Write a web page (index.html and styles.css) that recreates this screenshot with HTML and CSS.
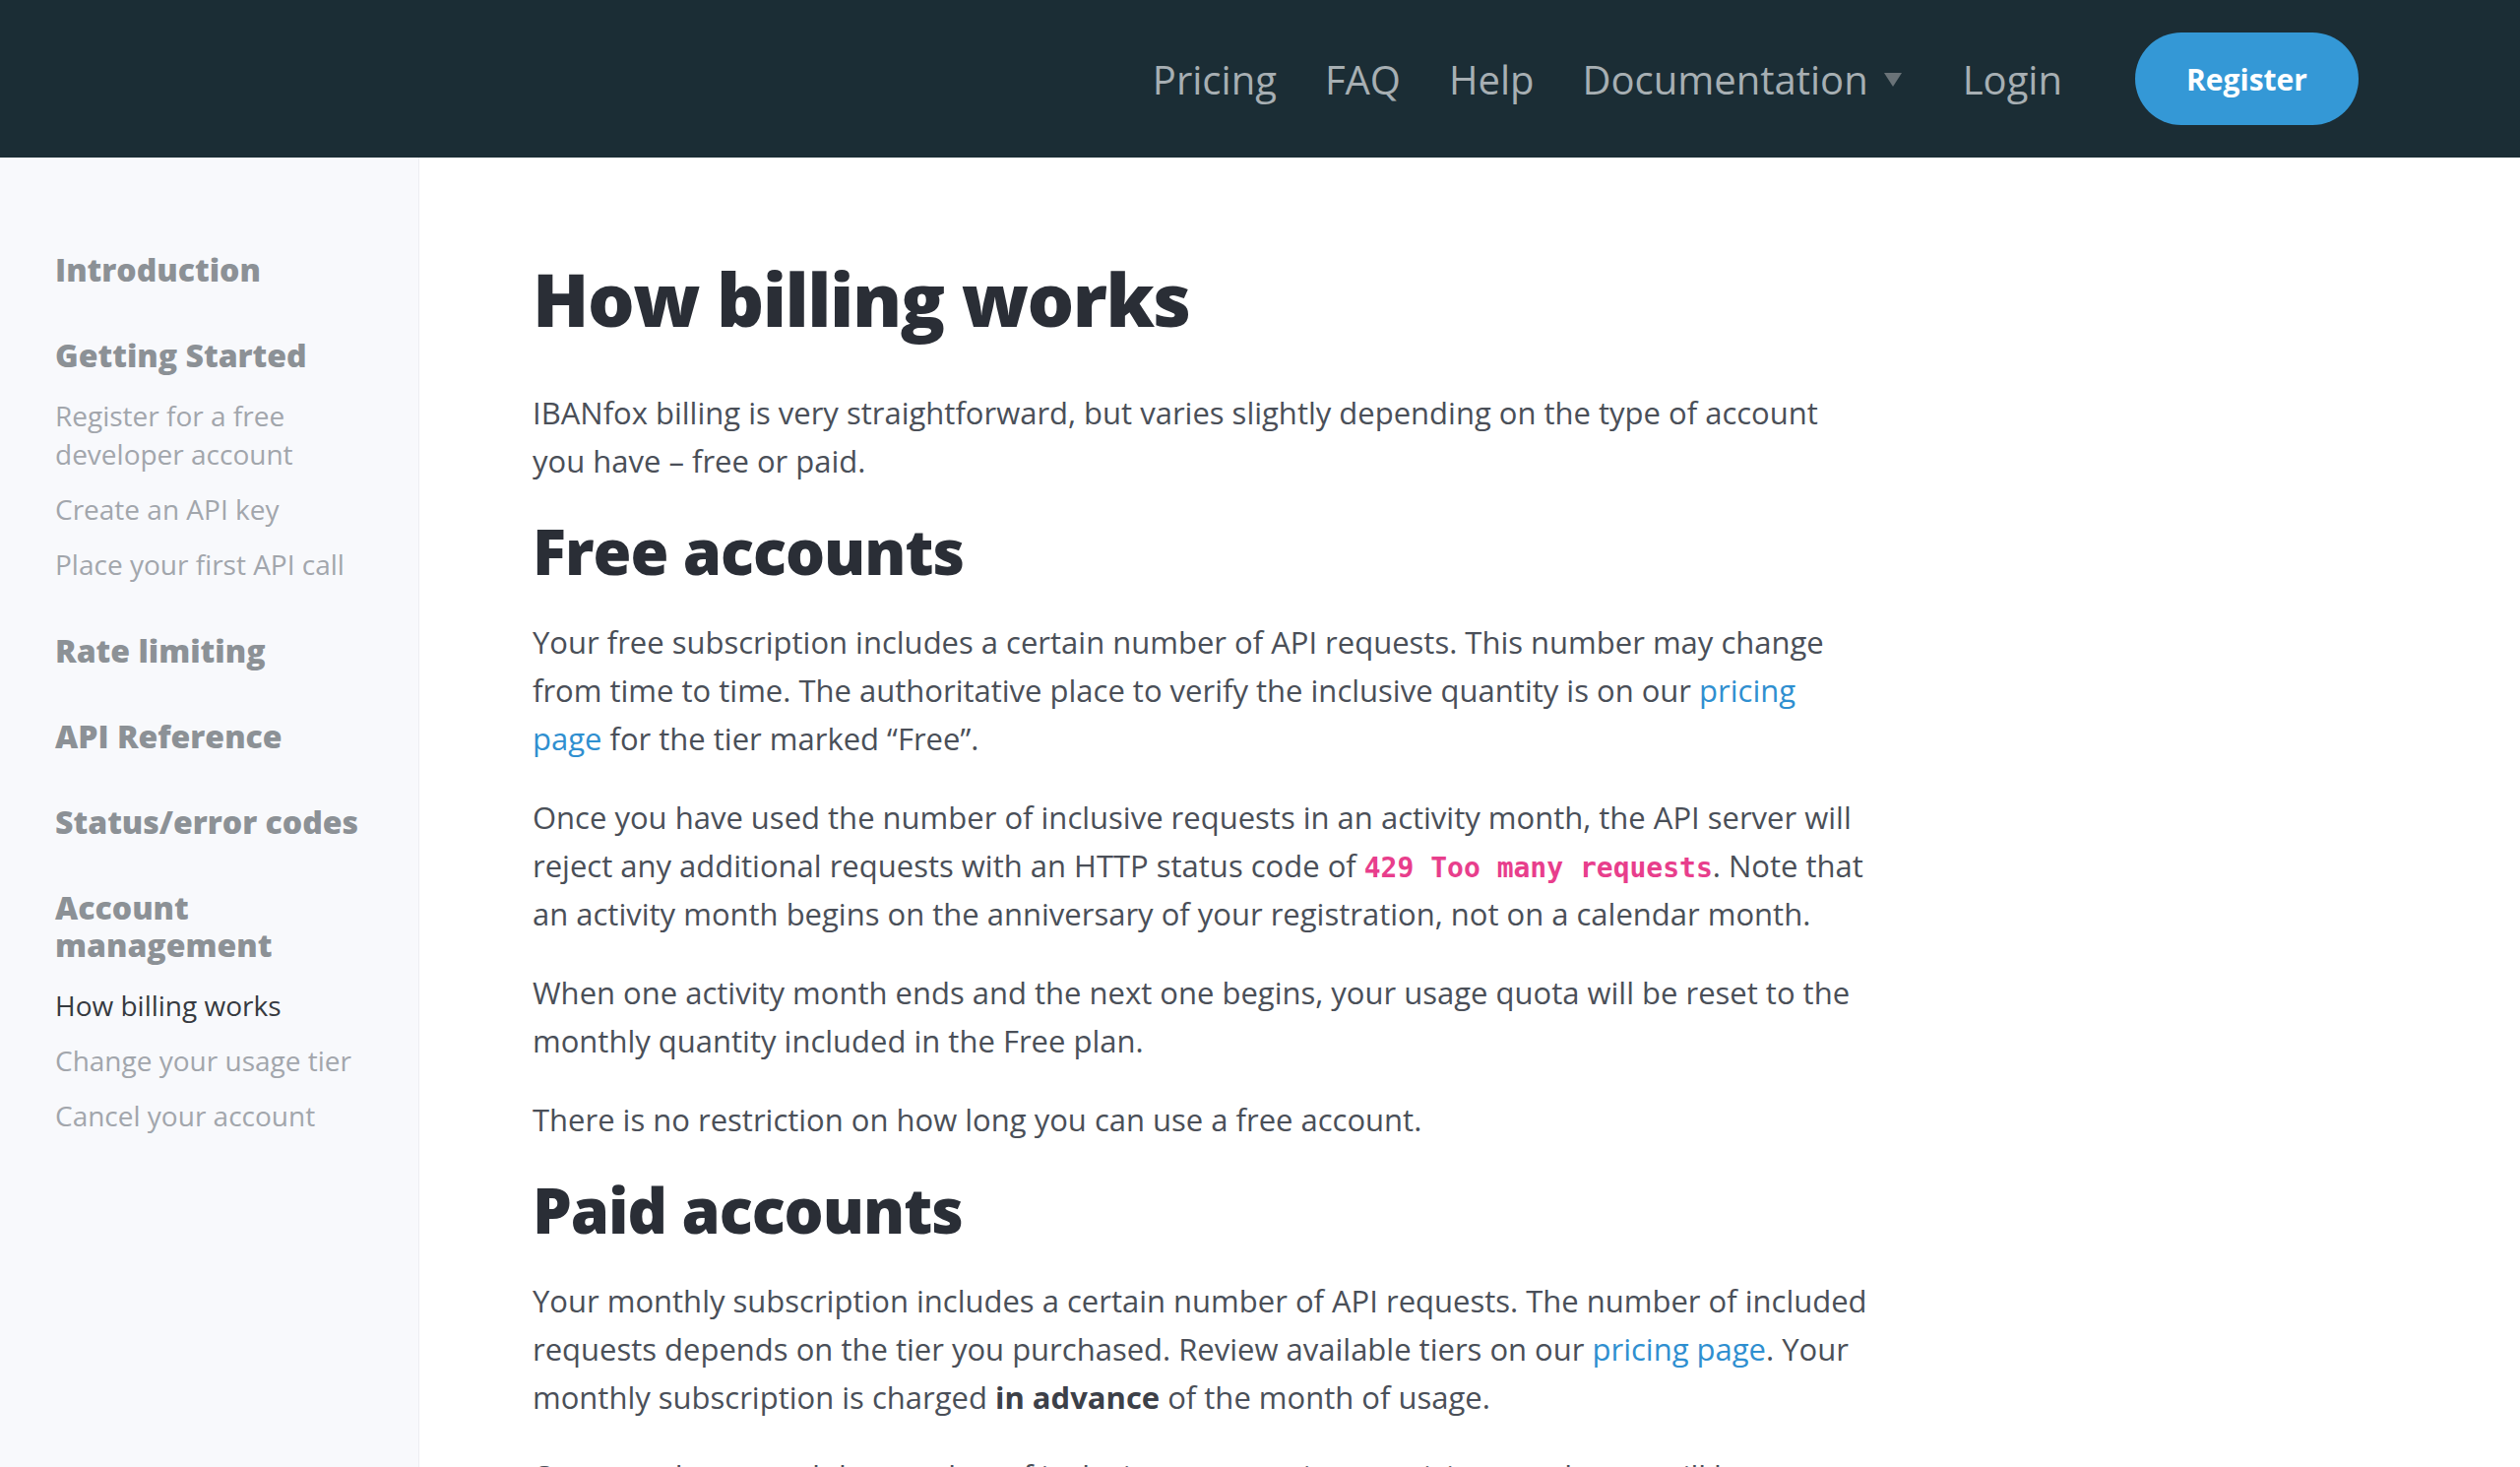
FILE: index.html
```html
<!DOCTYPE html>
<html lang="en">
<head>
    <meta charset="UTF-8">
    <meta name="viewport" content="width=device-width, initial-scale=1.0">
    <title>How billing works - IBANfox Documentation</title>
    <link rel="stylesheet" href="styles.css">
</head>
<body>

<header class="topbar">
    <nav class="topnav">
        <a href="#" class="nav-link">Pricing</a>
        <a href="#" class="nav-link">FAQ</a>
        <a href="#" class="nav-link">Help</a>
        <a href="#" class="nav-link dropdown">Documentation <span class="caret"></span></a>
        <a href="#" class="nav-link login">Login</a>
        <a href="#" class="btn-register">Register</a>
    </nav>
</header>

<div class="page">
    <aside class="sidebar">
        <ul class="side-menu">
            <li class="side-group"><a href="#" class="side-title">Introduction</a></li>
            <li class="side-group">
                <a href="#" class="side-title">Getting Started</a>
                <ul class="side-sub">
                    <li><a href="#">Register for a free developer account</a></li>
                    <li><a href="#">Create an API key</a></li>
                    <li><a href="#">Place your first API call</a></li>
                </ul>
            </li>
            <li class="side-group"><a href="#" class="side-title">Rate limiting</a></li>
            <li class="side-group"><a href="#" class="side-title">API Reference</a></li>
            <li class="side-group"><a href="#" class="side-title">Status/error codes</a></li>
            <li class="side-group">
                <a href="#" class="side-title">Account management</a>
                <ul class="side-sub">
                    <li><a href="#" class="active">How billing works</a></li>
                    <li><a href="#">Change your usage tier</a></li>
                    <li><a href="#">Cancel your account</a></li>
                </ul>
            </li>
        </ul>
    </aside>

    <main class="content">
        <h1>How billing works</h1>
        <p>IBANfox billing is very straightforward, but varies slightly depending on the type of account you have &ndash; free or paid.</p>

        <h2>Free accounts</h2>
        <p>Your free subscription includes a certain number of API requests. This number may change from time to time. The authoritative place to verify the inclusive quantity is on our <a href="#">pricing page</a> for the tier marked &ldquo;Free&rdquo;.</p>
        <p>Once you have used the number of inclusive requests in an activity month, the API server will reject any additional requests with an HTTP status code of <code>429 Too many requests</code>. Note that an activity month begins on the anniversary of your registration, not on a calendar month.</p>
        <p>When one activity month ends and the next one begins, your usage quota will be reset to the monthly quantity included in the Free plan.</p>
        <p>There is no restriction on how long you can use a free account.</p>

        <h2>Paid accounts</h2>
        <p>Your monthly subscription includes a certain number of API requests. The number of included requests depends on the tier you purchased. Review available tiers on our <a href="#">pricing page</a>. Your monthly subscription is charged <strong>in advance</strong> of the month of usage.</p>
        <p>Once you have used the number of inclusive requests in an activity month, you will be invoiced for any additional requests at the end of the activity month.</p>
    </main>
</div>

</body>
</html>
```

FILE: styles.css
```css
* {
    box-sizing: border-box;
}
body {
    margin: 0;
    font-family: 'Open Sans', 'Lato', sans-serif;
    color: #4a4f58;
    background: #fff;
}
a {
    text-decoration: none;
}

/* top bar */
.topbar {
    background: #1b2d35;
    height: 160px;
    display: flex;
    align-items: center;
    justify-content: flex-end;
    padding-right: 164px;
}
.topnav {
    display: flex;
    align-items: center;
}
.nav-link {
    color: #a7afb3;
    font-size: 40px;
    margin-left: 49px;
    display: flex;
    align-items: center;
}
.caret {
    width: 0;
    height: 0;
    border-left: 9px solid transparent;
    border-right: 9px solid transparent;
    border-top: 14px solid #6a7378;
    margin-left: 16px;
    margin-top: 2px;
}
.login {
    margin-left: 62px;
}
.btn-register {
    margin-left: 74px;
    background: #3498d6;
    color: #fff;
    font-size: 30px;
    font-weight: 700;
    width: 227px;
    height: 94px;
    border-radius: 47px;
    display: flex;
    align-items: center;
    justify-content: center;
}

/* layout */
.page {
    display: flex;
    min-height: calc(100vh - 160px);
}
.sidebar {
    width: 426px;
    flex-shrink: 0;
    background: #f8f9fc;
    border-right: 1px solid #eceef2;
    padding: 95px 36px 40px 56px;
}
.side-menu, .side-sub {
    list-style: none;
    margin: 0;
    padding: 0;
}
.side-group {
    margin-bottom: 49px;
}
.side-title {
    display: block;
    color: #8c9196;
    font-size: 32px;
    font-weight: 800;
    line-height: 38px;
}
.side-sub {
    margin: 23px 0 8px;
}
.side-sub li {
    margin-bottom: 17px;
}
.side-sub li:last-child {
    margin-bottom: 0;
}
.side-sub a {
    display: block;
    color: #a2a6ac;
    font-size: 28px;
    line-height: 39px;
}
.side-sub a.active {
    color: #363a40;
}

/* article */
.content {
    flex: 1;
    padding: 98px 0 0 115px;
}
.content h1 {
    margin: 0 0 47px;
    font-size: 75px;
    font-weight: 800;
    color: #2a2e36;
    letter-spacing: -1.5px;
    line-height: 1.2;
}
.content h2 {
    margin: 0 0 32px;
    font-size: 63px;
    font-weight: 800;
    color: #2a2e36;
    letter-spacing: -1px;
    line-height: 72px;
}
.content p {
    margin: 0 0 31px;
    font-size: 31px;
    line-height: 49px;
    max-width: 1360px;
}
.content p a {
    color: #2f8fd0;
}
.content strong {
    font-weight: 700;
    color: #3c4048;
}
code {
    font-family: 'DejaVu Sans Mono', monospace;
    font-size: 28px;
    font-weight: 700;
    line-height: 1;
    color: #e83e8c;
}
```
